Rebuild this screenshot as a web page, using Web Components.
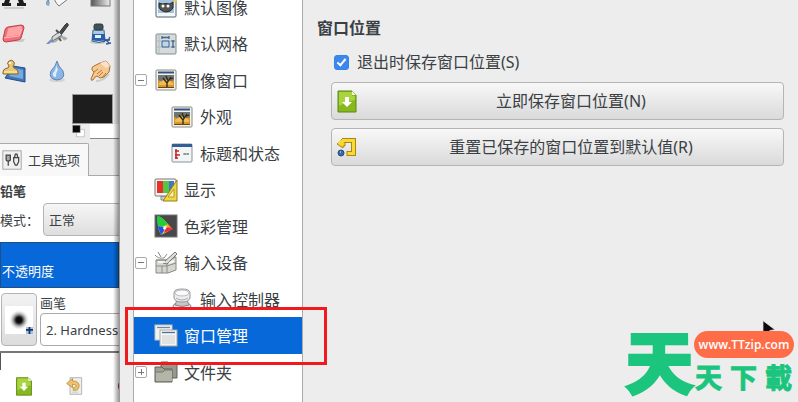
<!DOCTYPE html>
<html lang="zh-CN">
<head>
<meta charset="utf-8">
<title>窗口管理</title>
<style>
  body {
    margin: 0;
    background: #ededed;
    color: #3a4044;
    font-family: "Noto Sans", "Noto Sans CJK SC", sans-serif;
    font-size: 16px;
    line-height: 24px;
  }
</style>
</head>
<body>
<prefs-app></prefs-app>

<!-- Preferences window on top of the toolbox -->
<template id="prefs-app">
  <style>
    :host {
      display: flex;
      position: relative;
      height: 100vh;
      overflow: hidden;
    }
    tool-box { flex: 0 0 119px; }
    prefs-dialog { flex: 1; }
    site-mark { position: absolute; right: 4px; bottom: 4px; }
    .pointer { position: absolute; right: 20px; bottom: 64px; --size: 18px; }
  </style>
  <tool-box></tool-box>
  <prefs-dialog>
    <prefs-tree slot="nav">
      <tree-item icon="image">默认图像</tree-item>
      <tree-item icon="grid">默认网格</tree-item>
      <tree-item icon="picture" toggle="minus">图像窗口</tree-item>
      <tree-item icon="picture" level="2">外观</tree-item>
      <tree-item icon="title" level="2">标题和状态</tree-item>
      <tree-item icon="display">显示</tree-item>
      <tree-item icon="color">色彩管理</tree-item>
      <tree-item icon="input" toggle="minus">输入设备</tree-item>
      <tree-item icon="controller" level="2">输入控制器</tree-item>
      <tree-item icon="windows" selected>窗口管理</tree-item>
      <tree-item icon="folder" toggle="plus">文件夹</tree-item>
    </prefs-tree>
    <span slot="title">窗口位置</span>
    <prefs-check checked>退出时保存窗口位置(S)</prefs-check>
    <prefs-button icon="save">立即保存窗口位置(N)</prefs-button>
    <prefs-button icon="reset">重置已保存的窗口位置到默认值(R)</prefs-button>
  </prefs-dialog>
  <app-icon class="pointer" name="pointer"></app-icon>
  <site-mark></site-mark>
</template>

<template id="tool-box">
  <style>
    :host {
      display: flex;
      flex-direction: column;
      position: relative;
      overflow: hidden;
      background: #ebebeb;
      font-size: 13px;
      line-height: 20px;
    }
    /* shadow that the dialog throws on the toolbox */
    :host::after {
      content: "";
      position: absolute;
      inset: 0 0 0 auto;
      width: 6px;
      background: linear-gradient(90deg, rgba(0,0,0,0), rgba(0,0,0,.4));
    }
    .tools {
      display: grid;
      grid-template-columns: repeat(3, 43px);
      grid-auto-rows: 37px;
      place-items: center;
      margin: -22px 0 0 -8px;
      --size: 24px;
    }
    .colors {
      display: grid;
      grid-template-columns: 18px 23px 6px;
      grid-template-rows: 30px 15px;
      justify-content: end;
      margin-top: 5px;
    }
    .fg { grid-column: 1 / 3; background: #1d1d1d; border: 1px solid #999; box-sizing: border-box; }
    .swap { grid-row: 2; --size: 14px; }
    .bg { grid-area: 2 / 2 / 3 / 4; background: #fff; border-bottom: 1px solid #888; }
    .tabs { display: flex; margin-top: 4px; height: 32px; border-bottom: 1px solid #aaa; }
    .tab {
      display: flex;
      align-items: center;
      gap: 6px;
      width: 89px;
      height: 33px;
      padding: 0 0 0 2px;
      box-sizing: border-box;
      background: #f8f8f8;
      border: 1px solid #aaa;
      border-width: 1px 1px 0 0;
      border-radius: 0 2px 0 0;
      color: inherit;
      font: inherit;
      white-space: nowrap;
      --size: 20px;
    }
    .options { flex: 1; background: #fff; }
    h2 { margin: 0; padding: 5px 0 2px; font-size: 13px; line-height: 20px; }
    .mode { display: flex; align-items: center; gap: 2px; white-space: nowrap; }
    .mode label { flex: 0 0 41px; }
    select {
      flex: 0 0 120px;
      height: 33px;
      padding: 0 5px;
      appearance: none;
      border: 1px solid #b4b4b4;
      border-radius: 4px;
      background: linear-gradient(#f6f6f6, #dedede);
      color: inherit;
      font: inherit;
    }
    .opacity { display: grid; margin-top: 6px; color: #fff; }
    .opacity > * { grid-area: 1 / 1; }
    .opacity label { align-self: end; padding: 0 2px 7px; z-index: 1; }
    input[type=range] {
      appearance: none;
      width: 100%;
      height: 46px;
      margin: 0;
      background: #0668d9;
      border: 1px solid #1f4f86;
      box-sizing: border-box;
    }
    input[type=range]::-webkit-slider-thumb { appearance: none; width: 0; }
    .brush { display: grid; grid-template-columns: 36px 150px; gap: 0 3px; padding: 5px 0 5px 1px; }
    .brush button {
      grid-row: 1 / 3;
      padding: 0;
      border: 1px solid #b4b4b4;
      border-radius: 4px;
      background: linear-gradient(#f2f2f2, #dcdcdc);
      --size: 28px;
    }
    .brush app-icon { margin: auto; }
    .brush input {
      height: 33px;
      padding: 0 5px;
      box-sizing: border-box;
      border: 1px solid #aaa;
      border-radius: 4px;
      color: inherit;
      font: inherit;
    }
    .footer {
      display: flex;
      gap: 31px;
      padding: 23px 0 10px 14px;
      border-top: 2px solid #777;
      background: linear-gradient(#555, #555) 0 0 / 1px 17px no-repeat;
      --size: 20px;
    }
    .footer button { padding: 0; border: 0; background: none; }
  </style>
  <div class="tools">
    <app-icon name="text"></app-icon>
    <app-icon name="bucket"></app-icon>
    <app-icon name="gradient"></app-icon>
    <app-icon name="eraser"></app-icon>
    <app-icon name="airbrush"></app-icon>
    <app-icon name="ink"></app-icon>
    <app-icon name="clone"></app-icon>
    <app-icon name="drop"></app-icon>
    <app-icon name="smudge"></app-icon>
  </div>
  <div class="colors">
    <div class="fg"></div>
    <app-icon class="swap" name="swap"></app-icon>
    <div class="bg"></div>
  </div>
  <div class="tabs">
    <button class="tab"><app-icon name="options"></app-icon>工具选项</button>
  </div>
  <div class="options">
    <h2>铅笔</h2>
    <div class="mode">
      <label for="mode">模式：</label>
      <select id="mode"><option>正常</option></select>
    </div>
    <div class="opacity">
      <label for="opacity">不透明度</label>
      <input id="opacity" type="range" value="100">
    </div>
    <div class="brush">
      <button aria-label="画笔"><app-icon name="brush"></app-icon></button>
      <label for="brush">画笔</label>
      <input id="brush" value="2. Hardness">
    </div>
    <div class="footer">
      <button aria-label="save"><app-icon name="save"></app-icon></button>
      <button aria-label="revert"><app-icon name="revert"></app-icon></button>
      <button aria-label="delete"><app-icon name="remove"></app-icon></button>
    </div>
  </div>
</template>

<template id="prefs-dialog">
  <style>
    :host {
      display: flex;
      padding-left: 13px;
      background: #ededed;
      border-left: 1px solid #999;
    }
    main { flex: 1; padding: 16px 14px 0; }
    h1 { margin: 0 0 10px; font-size: 16px; line-height: 24px; }
    .body { display: flex; flex-direction: column; gap: 8px; padding-left: 14px; }
  </style>
  <slot name="nav"></slot>
  <main>
    <h1><slot name="title"></slot></h1>
    <div class="body"><slot></slot></div>
  </main>
</template>

<template id="prefs-tree">
  <style>
    :host {
      display: block;
      flex: 0 0 168px;
      background: #fff;
      border: 1px solid #aaa;
      border-width: 0 1px;
    }
    /* the list is scrolled a little */
    nav { display: grid; grid-auto-rows: 36px 37px; margin-top: -11px; }
  </style>
  <nav><slot></slot></nav>
</template>

<template id="tree-item">
  <style>
    :host {
      display: grid;
      grid-template-columns: 14px 24px 1fr;
      gap: 6px;
      align-items: center;
      position: relative;
      line-height: 16px;
      white-space: nowrap;
      --size: 24px;
    }
    :host([level="2"]) { padding-left: 16px; }
    :host([selected]) { background: #0668d9; color: #fff; z-index: 1; }
    button {
      display: none;
      width: 12px;
      height: 12px;
      margin-left: 1px;
      padding: 0;
      border: 1px solid #aaa;
      border-radius: 2px;
      background: linear-gradient(#777, #777) center / 6px 1px no-repeat #fff;
    }
    :host([toggle]) button { display: block; }
    :host([toggle=plus]) button {
      background: linear-gradient(#777, #777) center / 6px 1px no-repeat,
        linear-gradient(#777, #777) center / 1px 6px no-repeat #fff;
    }
    app-icon { grid-column: 2; grid-row: 1; }
    .label { grid-column: 3; padding-top: 1px; }
    /* red frame round the current page */
    :host([selected])::after {
      content: "";
      position: absolute;
      inset: -10px -25px -11px -9px;
      border: 3px solid #f0191c;
    }
  </style>
  <button aria-label="toggle"></button>
  <app-icon></app-icon>
  <span class="label"><slot></slot></span>
</template>

<template id="prefs-check">
  <style>
    :host { display: block; }
    label { display: flex; align-items: center; gap: 8px; padding-left: 3px; }
    input {
      appearance: none;
      width: 15px;
      height: 15px;
      box-sizing: border-box;
      margin: 0;
      border-radius: 3px;
      border: 1px solid #3583e8;
      background: #fff;
    }
    input:checked { background: #3b87ee; }
    input:checked::before {
      content: "";
      display: block;
      width: 3px;
      height: 7px;
      margin: 1px auto;
      border: solid #fff;
      border-width: 0 2px 2px 0;
      transform: rotate(40deg);
    }
  </style>
  <label><input type="checkbox"><slot></slot></label>
</template>

<template id="prefs-button">
  <style>
    :host { display: block; }
    button {
      display: grid;
      grid-template-columns: 24px 1fr;
      align-items: center;
      width: 100%;
      height: 38px;
      padding: 0 0 0 3px;
      border: 1px solid #b5b5b5;
      border-radius: 4px;
      background: linear-gradient(#f8f8f8, #dadada);
      color: inherit;
      font: inherit;
      --size: 24px;
    }
  </style>
  <button><app-icon></app-icon><span><slot></slot></span></button>
</template>

<template id="site-mark">
  <style>
    :host {
      display: grid;
      grid-template-columns: 68px 100px;
      align-items: center;
      color: #1cc57e;
      font-weight: 700;
      -webkit-text-stroke: 1px #1cc57e;
    }
    .big { font-size: 67px; line-height: 72px; -webkit-text-stroke: 4px #1cc57e; }
    a {
      display: block;
      border-radius: 14px;
      background: #ff6d48;
      color: #fff;
      font: 600 12px/27px "Open Sans", sans-serif;
      text-align: center;
      text-decoration: none;
      -webkit-text-stroke: 0;
    }
    .small { display: flex; justify-content: space-between; padding: 4px 2px 0 1px; font-size: 27px; line-height: 32px; }
  </style>
  <span class="big">天</span>
  <div>
    <a href="#">www.TTzip.com</a>
    <div class="small"><span>天</span><span>下</span><span>載</span></div>
  </div>
</template>

<script>
  const photo = (y) => `
    <rect x="2" y="2" width="20" height="20" rx="1" fill="#f3f3ee" stroke="#888a85"/>
    <path d="M4 4.500h16" stroke="#33507f" stroke-width="2"/>
    <path d="M4 ${y}h16v${20 - y}h-16z" fill="#d9962c"/>
    <path d="M4 ${y}h16v5q-8 4-16 0z" fill="#6f7672"/>
    <path d="M5 15q7-7 14 0v2h-14z" fill="#efbd58"/>
    <path d="M13 20v-5l-4-5m4 5l4-6m-3 4l-2-5m4 3l3-1" fill="none" stroke="#30240f" stroke-width="1.300"/>
    <path d="M4 19h16v1h-16z" fill="#6a4310"/>`

  const icons = {
    text: '<path d="M8 1h8l6 17h2v3h-9v-3h2l-1-3h-8l-1 3h2v3h-9v-3h2z" fill="#1d1d1d"/><path d="M2 23h20" stroke="#ccc" stroke-width="2"/>',
    bucket: '<path d="M8 8l9-5 6 11-9 7q-5-4-6-13z" fill="#f8f8f8" stroke="#777"/><path d="M8 8q-5 3-5 10" fill="none" stroke="#888" stroke-width="2"/><path d="M1 16l4 1-1 4-3-1z" fill="#8aa9d0"/>',
    gradient: '<defs><linearGradient id="g"><stop stop-color="#555"/><stop offset="1" stop-color="#eee"/></linearGradient></defs><rect x="3" y="3" width="19" height="18" fill="url(#g)" stroke="#777"/>',
    eraser: '<path d="M3 20h18l2-3-17-1z" fill="#999" opacity=".4"/><path d="M6 5l13-2q3 0 3 3l-3 10q-1 2-3 2l-12 2q-3 0-3-3l2-9q1-3 3-3z" fill="#f06f79" stroke="#c33d4b"/><path d="M7 6l11-2q2 0 2 2l-2 7-14 2 2-7q0-2 1-2z" fill="#ffa4a5"/><path d="M2 16l15-2 3-7" fill="none" stroke="#ffbcbc"/>',
    airbrush: '<path d="M5 19q5 2 8-2t9 0M12 9l8 9" fill="none" stroke="#aaa" stroke-width="2"/><path d="M14 11l6-8q2-3 3-1 1 1-1 3l-6 8z" fill="#454a4b" stroke="#333"/><path d="M7 15l7-5 3 3-6 4q-3 1-4 3z" fill="#d3d8db" stroke="#666"/><path d="M11 8l3 3m0 5l2 3" stroke="#555" stroke-width="2"/><path d="M1 22l5-5 2 2-4 3z" fill="#7593c4"/>',
    ink: '<ellipse cx="10" cy="20" rx="8" ry="2" fill="#999" opacity=".4"/><path d="M5 8h11l1 11q-6 3-13 0z" fill="#a8cbe9" stroke="#456783"/><path d="M4 12h13v6q-6 2-13 0z" fill="#2861a8"/><path d="M7 13h6v3h-6z" fill="#e5eff8"/><rect x="6" y="2" width="9" height="6" rx="2" fill="#40535b" stroke="#29383e"/><path d="M15 20q3-3 7-2m-5-1l4 4m1-6l-3 5m-1 2l5-1" stroke="#315997" stroke-width="1.300" fill="none"/>',
    clone: '<path d="M11 7l12 2v14l-20-4z" fill="#3d76b9" stroke="#244e87"/><path d="M12 9l9 2v9l-14-3z" fill="#79a8da"/><path d="M1 13q0-3 4-4h1l1-2q-3-3 0-5 3-2 5 1 1 2-1 4l1 2q4 1 4 4v2h-15z" fill="#e5c976" stroke="#89662a"/><path d="M2 13h13" stroke="#fff0b5"/><path d="M7 4h2" stroke="#fff5ca" stroke-width="2"/>',
    drop: '<ellipse cx="12" cy="21" rx="8" ry="2" fill="#999" opacity=".3"/><path d="M12 2q1 5 6 10 3 8-6 9-9-1-6-9 5-5 6-10z" fill="#8ab5e5" stroke="#5c83b5"/><path d="M11 6q0 5-3 8-1 4 3 4 0-5 2-7z" fill="#dcedfb"/>',
    smudge: '<path d="M8 22q8 0 13-7" fill="none" stroke="#ccc" stroke-width="2"/><path d="M5 21q-2 1-2-1l3-7-2-2q-1-3 2-4l6-3 6-2 4 5-1 6-5 5-4 1-3-2-2 1z" fill="#f5c98f" stroke="#a9702f"/><path d="M9 15l5-4m-3 6l4-4m-1 6l4-5M6 13l4-3" fill="none" stroke="#b57a38"/><path d="M12 4l6-2 4 5-4 2z" fill="#fbe0cf"/>',
    swap: '<rect x="8" y="9" width="13" height="13" fill="#fff" stroke="#aaa"/><rect x="1" y="2" width="13" height="13" fill="#080808" stroke="#aaa"/>',
    options: '<rect x="1" y="1" width="22" height="22" fill="#f1f1f1" stroke="#999"/><path d="M5 6h5v6l-1 1h-3l-1-1zM7.500 13v6" fill="#aaa" stroke="#444" stroke-width="1.500"/><path d="M15 9l1-4h2l1 4m-5 0h6v5l-2 4h-2l-2-4z" fill="#eee" stroke="#444" stroke-width="1.500"/>',
    image: '<rect x="2" y="2" width="20" height="20" rx="1" fill="#f4f7fa" stroke="#526176"/><rect x="4" y="4" width="16" height="14" fill="#a4c1dd"/><path d="M5 8l3 1q4-1 8 0l3-2v6q-2 4-7 4-6-1-7-5z" fill="#54544e" stroke="#282b2b"/><circle cx="9" cy="11" r="1.500" fill="#fff"/><circle cx="14" cy="11" r="1.500" fill="#fff"/><path d="M20 2l2 5" stroke="#edcb4c" stroke-width="3"/>',
    grid: '<rect x="2" y="2" width="20" height="20" rx="1" fill="#d5dadb" stroke="#848b8d"/><path d="M5 3v18M3 9h18M3 15h18" stroke="#b1babf"/><path d="M8 9h7v6H8z" fill="#bdd6ea" stroke="#3a6690"/><path d="M8 5.500h7M8 4v3m7-3v3m4 2v6m-1.500-6h3m-3 6h3" stroke="#3a6690" stroke-width="1.300"/>',
    picture: photo(7),
    title: '<rect x="2" y="3" width="20" height="18" rx="1" fill="#f3f4f4" stroke="#88929c"/><path d="M2 4.500h20" stroke="#315e94" stroke-width="3"/><path d="M6 8v10m-1-8h4m-4 4h5m-5 3h3" stroke="#c42424" stroke-width="1.500"/><path d="M13 13h6m-4-1v2m3-2v2" stroke="#6b7b8e"/>',
    display: '<path d="M7 18h10v4h-10z" fill="#ccc" stroke="#888"/><rect x="1" y="1" width="21" height="17" rx="1" fill="#f4f4f4" stroke="#777"/><path d="M3 3h6v12h-6z" fill="#e92f28"/><path d="M9 3h6v12h-6z" fill="#55c746"/><path d="M15 3h5v12h-5z" fill="#4276c8"/><path d="M23 2v21h-14z" fill="#f0d647" stroke="#987f14"/><path d="M20 11v8h-6z" fill="#fff4ad" stroke="#b29b28"/>',
    color: '<defs><linearGradient id="v"><stop stop-color="#23aef0"/><stop offset=".5" stop-color="#efe928"/><stop offset="1" stop-color="#f02d22"/></linearGradient></defs><rect x="1" y="1" width="22" height="22" fill="#484848" stroke="#777"/><path d="M3 3q1-2 5 1l11 11-12 6q-4-7-4-18z" fill="url(#v)"/><path d="M3 3q1-2 5 1l6 6-6 3-4-2z" fill="#24cf35"/><path d="M4 12l8 2-5 7z" fill="#294ce8"/><path d="M12 13l7 2-9 4z" fill="#e62758"/><path d="M10 12l3 1-2 3-2-1z" fill="#f4efff"/>',
    input: '<path d="M2 9h11l9-3v13l-8 3h-12z" fill="#d6d6d0" stroke="#888a85"/><path d="M2 9h11l9-3M13 9v13M2 15h11l9-3M8 15v7" fill="none" stroke="#8b8d88"/><path d="M1 4q3 4 9 3l3-4M4 1l3 5" fill="none" stroke="#888"/><path d="M9 12l12-11 2 2-10 10z" fill="#dcdcd7" stroke="#777"/><path d="M4 11h7m4 1l5-2" stroke="#fff" stroke-width="1.500"/>',
    controller: '<ellipse cx="12" cy="19" rx="9" ry="3.500" fill="#e6e6e6" stroke="#85858b"/><path d="M7 13h10l2 5q-7 3-14 0z" fill="#c6c6ca" stroke="#888"/><path d="M4 6q0-4 8-4t8 4v5q-1 4-8 4t-8-4z" fill="#eee" stroke="#96969b"/><ellipse cx="12" cy="6" rx="7" ry="3" fill="#fafafa" stroke="#bbb"/><path d="M6 11q6 4 12 0" fill="none" stroke="#aaa"/>',
    windows: '<rect x="1" y="1" width="17" height="15" fill="#f2f2ef" stroke="#c4c4bf"/><path d="M3 3.500h13" stroke="#6a86a8" stroke-width="1.300"/><rect x="6" y="6" width="17" height="16" fill="#f4f4f2" stroke="#a9a9a5"/><path d="M8 8.500h13" stroke="#4d6f9b" stroke-width="1.300"/><path d="M8 11h13v9h-13z" fill="#e0e2e2"/>',
    folder: '<path d="M7 2h7l1 2h8v14h-16z" fill="#96998b" stroke="#606456"/><path d="M1 7h7l2 2h8v13h-17z" fill="#9da293" stroke="#5b6052"/><path d="M2 12h7l2-2h7v11h-16z" fill="#b2b5a7"/><path d="M2 12h7l2-2h7" fill="none" stroke="#75796b"/>',
    save: '<path d="M3 2h14l4 4v17h-18z" fill="#86b91d" stroke="#5d8515"/><path d="M4 3h13v4h3v4q-7 1-16 6z" fill="#a9d33f"/><path d="M17 2v4h4z" fill="#f0f8cc"/><path d="M10 8h4v5h3l-5 5-5-5h3z" fill="#fff"/>',
    reset: '<path d="M7 5.500h11.500v13h-7" fill="none" stroke="#ab860c" stroke-width="5"/><path d="M2 9l6-6v4h2v4h-2v2z" fill="#f5d52b" stroke="#ab860c"/><path d="M7 5.500h11.500v13h-6" fill="none" stroke="#f7da38" stroke-width="3"/><path d="M4 9q1-3 5-3" fill="none" stroke="#f7da38" stroke-width="3"/><circle cx="6" cy="18" r="3" fill="#3d68a8" stroke="#284b7c"/><path d="M5 17h1" stroke="#a9c8ed" stroke-width="1.500"/>',
    revert: '<path d="M6 2h14v20h-14z" fill="#eeeeea" stroke="#aaa"/><path d="M8 18h8m-8 2h8" stroke="#ccc"/><path d="M2 9l7-6v3q8 0 8 6-1 6-7 5v-3q4 0 3-3-1-1-4-1v4z" fill="#efc36c" stroke="#bd8c35"/>',
    remove: '<circle cx="12" cy="12" r="9" fill="#c92f38" stroke="#8d2028"/>',
    brush: '<defs><radialGradient id="b"><stop stop-color="#000"/><stop offset=".3" stop-color="#151515"/><stop offset="1" stop-color="#fff" stop-opacity="0"/></radialGradient></defs><path d="M0 0h24v24h-24z" fill="#fff"/><circle cx="12" cy="12" r="9" fill="url(#b)"/><path d="M18 18h6v6h-6z" fill="#a7c3ea"/><path d="M18 20.500h6M21 18v6" stroke="#17335f" stroke-width="1.500"/>',
    pointer: '<path d="M4 1v19l5-4 5 7 4-3-5-6 7-1z" fill="#0a0a0a" stroke="#ddd"/>'
  }

  class BaseElement extends HTMLElement {
    constructor() {
      super()

      const template = document.getElementById(this.localName)
      this.shadow = this.attachShadow({ mode: 'open' })
      this.shadow.appendChild(template.content.cloneNode(true))
    }
  }

  class AppIcon extends HTMLElement {
    constructor() {
      super()
      this.shadow = this.attachShadow({ mode: 'open' })
    }

    static get observedAttributes() {
      return ['name']
    }

    attributeChangedCallback() {
      this.shadow.innerHTML = `
        <style>
          :host { display: block; width: var(--size, 24px); height: var(--size, 24px); }
          svg { display: block; width: 100%; height: 100%; }
        </style>
        <svg viewBox="0 0 24 24" aria-hidden="true">${icons[this.getAttribute('name')] || ''}</svg>`
    }
  }

  // anything with an icon attribute hands it to the icon inside
  class IconElement extends BaseElement {
    connectedCallback() {
      this.shadow.querySelector('app-icon').setAttribute('name', this.getAttribute('icon'))
    }
  }

  class PrefsCheck extends BaseElement {
    connectedCallback() {
      this.shadow.querySelector('input').checked = this.hasAttribute('checked')
    }
  }

  customElements.define('app-icon', AppIcon)
  customElements.define('tree-item', class extends IconElement {})
  customElements.define('prefs-button', class extends IconElement {})
  customElements.define('prefs-check', PrefsCheck)
  customElements.define('prefs-tree', class extends BaseElement {})
  customElements.define('prefs-dialog', class extends BaseElement {})
  customElements.define('tool-box', class extends BaseElement {})
  customElements.define('site-mark', class extends BaseElement {})
  customElements.define('prefs-app', class extends BaseElement {})
</script>
</body>
</html>
